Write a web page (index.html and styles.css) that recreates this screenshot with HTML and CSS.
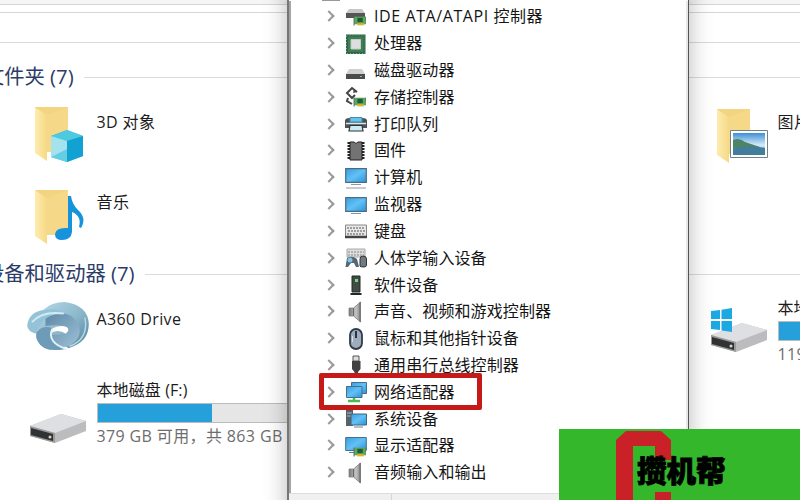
FILE: index.html
```html
<!DOCTYPE html>
<html lang="zh-CN">
<head>
<meta charset="utf-8">
<title>设备管理器</title>
<link rel="stylesheet" href="styles.css">
</head>
<body>
<svg width="0" height="0" class="defs" aria-hidden="true">
  <defs>
    <linearGradient id="fold" x1="0" x2="1"><stop offset="0" stop-color="#fdecb0"/><stop offset="1" stop-color="#f6d985"/></linearGradient>
    <linearGradient id="screen" x1="0" y1="0" x2="1" y2="1"><stop offset="0" stop-color="#3a9fe0"/><stop offset=".5" stop-color="#62c0f5"/><stop offset="1" stop-color="#2b93d8"/></linearGradient>
    <linearGradient id="metal" x1="0" x2="1"><stop offset="0" stop-color="#777"/><stop offset=".6" stop-color="#c4c4c4"/><stop offset="1" stop-color="#888"/></linearGradient>
    <linearGradient id="rim" x1="0" y1="0" x2="1" y2="1"><stop offset="0" stop-color="#b4dbe9"/><stop offset=".55" stop-color="#8bb6ca"/><stop offset="1" stop-color="#4d7f9c"/></linearGradient>
    <linearGradient id="inner" x1="0" y1="0" x2="1" y2="1"><stop offset="0" stop-color="#5f88a8"/><stop offset="1" stop-color="#9dc0d6"/></linearGradient>
    <linearGradient id="sky" x1="0" y1="0" x2="0" y2="1"><stop offset="0" stop-color="#3f8fd6"/><stop offset=".55" stop-color="#d5ebf7"/><stop offset="1" stop-color="#6da9c6"/></linearGradient>
    <symbol id="folder" viewBox="0 0 50 58">
      <path d="M1 1H34V46H8Z" fill="#f5d888"/>
      <path d="M1 1L13 9V55L1 47Z" fill="url(#fold)"/>
      <path d="M1 1H34L13 9Z" fill="#f3d480"/>
    </symbol>
    <symbol id="disk" viewBox="0 0 60 34">
      <path d="M2 14L33 2L58 9L58 19L27 31L2 24Z" fill="#bcbcbe"/>
      <path d="M2 14L33 2L58 9L27 21Z" fill="#dedfe2"/>
      <path d="M2 14L27 21V31L2 24Z" fill="#999"/>
      <path d="M3 16L25 22V29L3 23Z" fill="#303234"/>
      <circle cx="22" cy="25" r="1.5" fill="#cfe0c0"/>
    </symbol>
    <symbol id="card" viewBox="0 0 12 9"><path d="M1 1H12V8H1Z" fill="#5aa860"/><path d="M1 1V9M12 1V5" stroke="#587060"/><path d="M4 2H9V6H4Z" fill="#215b35"/><path d="M4 8H10" stroke="#e1b329" stroke-width="2"/></symbol>
    <symbol id="i-ide" viewBox="0 0 22 22"><path d="M4 3H17L20 7H1Z" fill="#c7c7c7"/><path d="M1 7H20V12H1Z" fill="#555"/><use href="#card" x="8" y="9" width="13" height="11"/></symbol>
    <symbol id="i-cpu" viewBox="0 0 22 22"><path d="M2 2.500H19.500V20H2Z" fill="#427c57" stroke="#2c6845" stroke-width="2"/><path d="M1.500 2H20V20.500H1.500Z" fill="none" stroke="#86a892" stroke-width="1" stroke-dasharray="1 2"/><path d="M6 6.500H15.500V16H6Z" fill="#dedede" stroke="#b8d2c0"/></symbol>
    <symbol id="i-disk" viewBox="0 0 22 22"><path d="M4 9H17L20 14H1Z" fill="#d0d0d0"/><path d="M1 14H20V19H1Z" fill="#4b4d4d"/><path d="M15 16.500H17" stroke="#7fc68b"/></symbol>
    <symbol id="i-store" viewBox="0 0 22 22"><path d="M12 6L7 2L2 7L7 12L10 9M3 12L2 15L7 18" fill="none" stroke="#444" stroke-width="2"/><path d="M9 3L12 6L8 7" fill="#444"/><use href="#card" x="8" y="10" width="13" height="11"/></symbol>
    <symbol id="i-print" viewBox="0 0 22 22"><path d="M0 7Q1 5 4 5H18Q21 5 22 7V15H0Z" fill="#4b5359"/><path d="M5 4.500H17V9H5Z" fill="#65c4e8" stroke="#438bb2"/><path d="M1 10.500H21" stroke="#dfe6ea" stroke-width="1.500"/><path d="M5 12.500H17L18 18H4Z" fill="#c9ebf8" stroke="#333" stroke-width="1.200"/></symbol>
    <symbol id="i-chip" viewBox="0 0 22 22"><path d="M4 2V20M18 2V20" stroke="#222" stroke-width="3" stroke-dasharray="2 1"/><path d="M5 2H9Q11 5 13 2H17V20H5Z" fill="#737373" stroke="#222"/></symbol>
    <symbol id="i-pc" viewBox="0 0 22 22"><path d="M.7 1.700H21.300V15.300H.7Z" fill="url(#screen)" stroke="#4b6c83" stroke-width="1.200"/><path d="M6 17.500H16M1 21H21" stroke="#92989c"/></symbol>
    <symbol id="i-mon" viewBox="0 0 22 22"><path d="M.7 3.700H21.300V17.300H.7Z" fill="url(#screen)" stroke="#4b6c83" stroke-width="1.200"/><path d="M6 19.500H16" stroke="#7899a5"/></symbol>
    <symbol id="i-key" viewBox="0 0 22 22"><path d="M.5 5H21.500V17H.5Z" fill="#e8e8e8" stroke="#888"/><path d="M2 8H20M3 11H20M2 14H20" stroke="#858585" stroke-width="1.500" stroke-dasharray="2 1"/><path d="M0 17H22" stroke="#444" stroke-width="2.500"/></symbol>
    <symbol id="i-hid" viewBox="0 0 22 22"><path d="M2 2H20V10H2Z" fill="#ddd" stroke="#aaa"/><path d="M3 5H19M3 8H19" stroke="#888" stroke-dasharray="2 1"/><path d="M.5 20L2 11Q7 8 12 12L14 20L11 20L9 16H6L3 20Z" fill="#536774"/><circle cx="5" cy="13" r="2.500" fill="#80c6e5"/><path d="M15 19V12Q15 9 18 9Q21.500 9 21.500 12V18Q21.500 20 19 20Q15 20 15 19Z" fill="#6e7b86" stroke="#333"/></symbol>
    <symbol id="i-soft" viewBox="0 0 22 22"><path d="M7 2H15V18H7Z" fill="#414b43" stroke="#252a27"/><path d="M10 5H13V8H10Z" fill="#71d68f"/><path d="M5.500 20H16.500" stroke="#252525" stroke-width="2"/></symbol>
    <symbol id="i-sound" viewBox="0 0 22 22"><path d="M4 7H8.500L15.500 1V21L8.500 15H4Z" fill="url(#metal)" stroke="#808080" stroke-width=".8"/><path d="M8.500 7V15M15 1V21" stroke="#666"/></symbol>
    <symbol id="i-mouse" viewBox="0 0 22 22"><rect x="5" y="1" width="12" height="20" rx="6" fill="#9eacbc" stroke="#303b47" stroke-width="1.800"/><path d="M11 3V10" stroke="#293544" stroke-width="2"/><path d="M7.500 8V14" stroke="#d7e0e9"/></symbol>
    <symbol id="i-usb" viewBox="0 0 22 22"><path d="M8 2H14V7H8Z" fill="#ddd" stroke="#555"/><path d="M7 7H15.500V15L13 18V22H9.500V18L7 15Z" fill="#414141"/></symbol>
    <symbol id="i-net" viewBox="0 0 22 22"><path d="M6.500 1.500H21.500V12.500H6.500Z" fill="url(#screen)" stroke="#426f8c"/><path d="M1.500 5.500H17V16.500H1.500Z" fill="url(#screen)" stroke="#426f8c"/><path d="M9 17V19M3 20H15" stroke="#4fbb56" stroke-width="2.500"/></symbol>
    <symbol id="i-sys" viewBox="0 0 22 22"><path d="M1 2H8V18H1Z" fill="#586068"/><path d="M2 5H7M2 8H7" stroke="#b5bdc1"/><path d="M6 6H21.500V17H6Z" fill="url(#screen)" stroke="#3e677f"/><path d="M9 19H18" stroke="#71808a"/></symbol>
    <symbol id="i-disp" viewBox="0 0 22 22"><path d="M.7 2.500H21.300V15.500H.7Z" fill="url(#screen)" stroke="#426f8c"/><path d="M4 17.500H9" stroke="#778"/><use href="#card" x="8" y="11" width="13" height="11"/></symbol>
  </defs>
</svg>
<div class="desktop">
  <main class="explorer">
    <div class="tabs"></div>
    <div class="address"></div>
    <div class="gap"></div>
    <section class="group folders">
      <h2><span>文件夹 (7)</span></h2>
      <div class="cells">
        <div class="cell">
          <svg class="pic" viewBox="0 0 60 60"><use href="#folder" x="6" y="0" width="50" height="58"/><path d="M23 30L39 24L55 30V50L39 56L23 51Z" fill="#35bcdc"/><path d="M23 30L39 24L55 30L39 35Z" fill="#4fc9e0"/><path d="M23 30L39 35V56L23 51Z" fill="#a4e2ed"/><path d="M39 35V56L23 51L39 43Z" fill="#65cde3"/><path d="M39 35L55 30V50L39 56Z" fill="#12a2d2"/></svg>
          <div class="name">3D 对象</div>
        </div>
        <div class="cell far">
          <svg class="pic" viewBox="0 0 60 60"><use href="#folder" x="7" y="2" width="50" height="58"/><path d="M21.500 24.500H58.500V51.500H21.500Z" fill="#fff" stroke="#71808a"/><path d="M24 27H56V49H24Z" fill="url(#sky)"/><path d="M24 34Q30 31 36 36L51 41L24 43Z" fill="#4d8366"/><path d="M24 43Q40 38 56 42V49H24Z" fill="#437d9c"/></svg>
          <div class="name">图片</div>
        </div>
        <div class="cell">
          <svg class="pic" viewBox="0 0 60 60"><use href="#folder" x="6" y="3" width="50" height="58"/><path d="M40 10H43Q44 18 50 24Q59 32 53 42L51 41Q54 30 44 26V46Q43 54 34 54Q27 54 27 48Q28 41 40 42Z" fill="#1593dc"/></svg>
          <div class="name">音乐</div>
        </div>
      </div>
    </section>
    <section class="group drives">
      <h2><span>设备和驱动器 (7)</span></h2>
      <div class="cells">
        <div class="cell">
          <svg class="pic swirl" viewBox="0 0 66 54">
            <path d="M18 9Q26 1 40 1Q64 4 65 24Q65 43 44 49L30 40Q14 36 12 29Z" fill="url(#rim)"/>
            <path d="M20 16Q44 6 54 24Q60 38 44 47Q28 51 25 35Q40 36 43 30Q40 23 20 26Z" fill="url(#inner)"/>
            <path d="M1 25Q3 11 19 9Q35 7 43 13Q15 12 11 34Q1 32 1 25Z" fill="#94c3d8"/>
            <path d="M6 22Q16 10 39 13" fill="none" stroke="#d2eaf2" stroke-width="2"/>
            <path d="M26 29Q35 24 42 27Q46 30 41 34Q34 29 26 33Z" fill="#fff"/>
            <path d="M11 32Q17 25 27 28Q21 42 40 50Q18 54 12 42Q9 37 11 32Z" fill="#6e9bb7"/>
            <path d="M27 29Q21 43 42 50" fill="none" stroke="#e6f1f5" stroke-width="2"/>
            <path d="M61 17Q65 40 45 47" fill="none" stroke="#b8d9e4" stroke-width="1.500"/>
          </svg>
          <div class="name">A360 Drive</div>
        </div>
        <div class="cell far system">
          <svg class="pic" viewBox="0 0 60 60"><use href="#disk" x="0" y="20" width="60" height="34"/><path d="M2 10L11 9V18H2ZM12.500 8.700L23 7V18H12.500ZM2 20H11V29L2 28ZM12.500 20H23V31L12.500 29.500Z" fill="#1ba9e4"/></svg>
          <div class="name">本地磁盘 (C:)<div class="meter"><i></i></div><div class="free">119 GB 可用</div></div>
        </div>
        <div class="cell local">
          <svg class="pic" viewBox="0 0 60 60"><use href="#disk" x="0" y="19" width="60" height="34"/></svg>
          <div class="name">本地磁盘 (F:)<div class="meter"><i></i></div><div class="free">379 GB 可用，共 863 GB</div></div>
        </div>
      </div>
    </section>
  </main>

  <section class="manager">
    <div class="edge"></div>
    <ul class="tree">
      <li><b></b><svg><use href="#i-ide"/></svg><span class="latin">IDE ATA/ATAPI 控制器</span></li>
      <li><b></b><svg><use href="#i-cpu"/></svg><span>处理器</span></li>
      <li><b></b><svg><use href="#i-disk"/></svg><span>磁盘驱动器</span></li>
      <li><b></b><svg><use href="#i-store"/></svg><span>存储控制器</span></li>
      <li><b></b><svg><use href="#i-print"/></svg><span>打印队列</span></li>
      <li><b></b><svg><use href="#i-chip"/></svg><span>固件</span></li>
      <li><b></b><svg><use href="#i-pc"/></svg><span>计算机</span></li>
      <li><b></b><svg><use href="#i-mon"/></svg><span>监视器</span></li>
      <li><b></b><svg><use href="#i-key"/></svg><span>键盘</span></li>
      <li><b></b><svg><use href="#i-hid"/></svg><span>人体学输入设备</span></li>
      <li><b></b><svg><use href="#i-soft"/></svg><span>软件设备</span></li>
      <li><b></b><svg><use href="#i-sound"/></svg><span>声音、视频和游戏控制器</span></li>
      <li><b></b><svg><use href="#i-mouse"/></svg><span>鼠标和其他指针设备</span></li>
      <li><b></b><svg><use href="#i-usb"/></svg><span>通用串行总线控制器</span></li>
      <li class="marked"><b></b><svg><use href="#i-net"/></svg><span>网络适配器</span></li>
      <li><b></b><svg><use href="#i-sys"/></svg><span>系统设备</span></li>
      <li><b></b><svg><use href="#i-disp"/></svg><span>显示适配器</span></li>
      <li><b></b><svg><use href="#i-sound"/></svg><span>音频输入和输出</span></li>
    </ul>
    <footer class="status"><div></div></footer>
  </section>

  <aside class="badge">
    <svg class="mark" viewBox="0 0 56 72"><path d="M0 72V11L10 2H45L55 11V31H39V17H17V72ZM39 72V63H55V72Z" fill="#c92127"/></svg>
    <strong>攒机帮</strong>
  </aside>
</div>
</body>
</html>
```
FILE: styles.css
```css
*, *::before, *::after { box-sizing: border-box; }
body {
  margin: 0;
  font: 16px/22px "Open Sans", "Noto Sans CJK SC", sans-serif;
  color: #1c1c1c;
}
.defs { position: absolute; }
.desktop { position: relative; width: 800px; height: 500px; overflow: hidden; background: #fff; }

/* file explorer */
.tabs { height: 5px; background: #f5f5f5; border-bottom: 1px solid #d6d6d6; }
.address { height: 8px; border-bottom: 1px solid #d6d6d6; }
.gap { height: 30px; border-bottom: 1px solid #d9d9d9; }
.group h2 {
  display: flex; align-items: center; gap: 10px;
  height: 28px; margin: 0 0 0 -16px;
  font-size: 20.3px; font-weight: 400; line-height: 28px; color: #2c3c68;
  white-space: nowrap;
}
.group h2::after { content: ""; flex: 1; height: 1px; margin-top: 3px; background: #dcdcdc; }
.cells { display: grid; grid-template-columns: 681px 300px; padding-left: 28px; }
.cell { display: flex; gap: 8.5px; height: 80px; }
.pic { width: 60px; height: 60px; flex: none; }
.name { padding-top: 5px; white-space: nowrap; letter-spacing: .4px; }
.folders { height: 217px; padding-top: 19px; }
.folders .cells { padding-top: 16px; }
.drives h2 { margin-top: -1px; }
.drives .cells { padding-top: 13px; }
.drives .cell { height: 71px; }
.swirl { width: 66px; height: 52px; margin: 1px -3px 0 -3px; }
.drives .name { padding-top: 8px; }
.drives .local .name, .drives .system .name { letter-spacing: .1px; }
.drives .system .name { margin-top: -11px; }
.system .pic { margin-top: 1px; }
.local .pic { margin-top: 22px; }
.meter { width: 232px; height: 20px; margin-top: 2px; border: 1px solid #bcbcbc; background: #e6e6e6; }
.meter i { display: block; width: 114px; height: 18px; background: #26a0da; }
.free { margin-top: 2px; color: #6d6d6d; font-size: 16px; letter-spacing: .37px; }

/* device manager window */
.manager {
  position: absolute; left: 287px; top: -20px; width: 402px; height: 540px;
  background: #fff; border-left: 2px solid #767676; border-right: 1px solid #555;
  box-shadow: 0 0 22px rgba(0, 0, 0, .28);
}
.edge { width: 18px; height: 21px; margin-left: 33px; border-bottom: 1px solid #999; }
.tree { height: 492px; margin: 0; padding: 2px 0 0 38px; border-left: 2px solid #a5a5a5; border-right: 2px solid #e8e8e8; list-style: none; }
.tree li { display: flex; align-items: center; height: 26.820px; white-space: nowrap; }
.tree b { width: 8px; height: 8px; margin-left: -4px; border: solid #999; border-width: 2px 2px 0 0; transform: rotate(45deg); }
.tree svg { width: 22px; height: 22px; margin: 1px 7px 0 12px; }
.tree span { color: #151515; letter-spacing: .1px; }
.tree .latin { letter-spacing: .58px; }
.marked { position: relative; }
.marked::after { content: ""; position: absolute; left: -10px; top: -5px; width: 163px; height: 37px; border: 5px solid #c51a17; border-radius: 2px; }
.status { display: flex; height: 30px; background: #f0f0f0; border-top: 1px solid #ddd; }
.status div { width: 103px; border-right: 1px solid #d5d5d5; }

/* corner badge */
.badge { position: absolute; left: 559px; top: 429px; width: 241px; height: 71px; display: flex; background: #35b72c; }
.mark { width: 56px; height: 72px; margin-left: 57px; flex: none; }
.badge strong { margin: 20px 0 0 -35px; font-size: 29.500px; line-height: 44px; font-weight: 900; color: #000; -webkit-text-stroke: .8px #000; }
```
